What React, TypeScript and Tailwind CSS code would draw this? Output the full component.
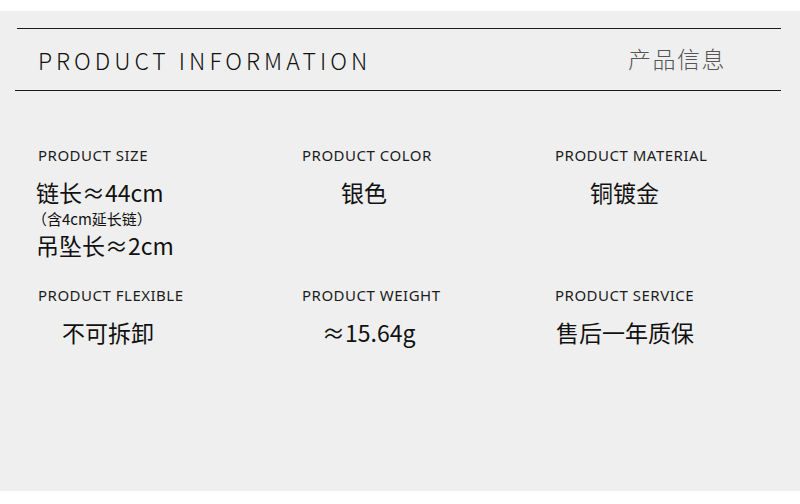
import React from "react";

interface Spec {
  label: string;
  indent: string;
  lines: { text: string; small?: boolean }[];
}

const cjk = "font-['Noto_Sans_CJK_SC',sans-serif]";

const rowOne: Spec[] = [
  {
    label: "PRODUCT SIZE",
    indent: "-ml-[2px]",
    lines: [{ text: "链长≈44cm" }, { text: "（含4cm延长链）", small: true }, { text: "吊坠长≈2cm" }],
  },
  { label: "PRODUCT COLOR", indent: "pl-[39px]", lines: [{ text: "银色" }] },
  { label: "PRODUCT MATERIAL", indent: "pl-[35px]", lines: [{ text: "铜镀金" }] },
];

const rowTwo: Spec[] = [
  { label: "PRODUCT FLEXIBLE", indent: "pl-[24px]", lines: [{ text: "不可拆卸" }] },
  { label: "PRODUCT WEIGHT", indent: "pl-[20px]", lines: [{ text: "≈15.64g" }] },
  { label: "PRODUCT SERVICE", indent: "pl-[1px]", lines: [{ text: "售后一年质保" }] },
];

function SpecCell({ spec }: { spec: Spec }) {
  return (
    <div className="flex flex-col">
      <div className="text-[15px] leading-[20px] text-[#1c1c1c] font-['Noto_Sans',sans-serif] tracking-[0.5px]">
        {spec.label}
      </div>
      <div className={`mt-[12px] flex flex-col ${spec.indent} ${cjk} text-[#111]`}>
        {spec.lines.map((l) =>
          l.small ? (
            <div key={l.text} className="text-[15px] leading-[23px] ml-[-4px]">
              {l.text}
            </div>
          ) : (
            <div key={l.text} className="text-[23px] leading-[30px]">
              {l.text}
            </div>
          )
        )}
      </div>
    </div>
  );
}

export default function App() {
  return (
    <div className="w-[800px] h-[504px] bg-white flex flex-col">
      <div className="h-[11px]" />
      <div className="h-[480px] bg-[#efefef] flex flex-col px-[16px] pt-[17px]">
        <div className="h-[1px] bg-[#1a1a1a] ml-[1px] mr-[3px]" />
        <div className="h-[61px] flex items-center justify-between pl-[22px] pr-[58px]">
          <span className={`${cjk} font-light text-[23px] tracking-[4px] text-[#111] mt-[2px]`}>
            PRODUCT INFORMATION
          </span>
          <span className={`${cjk} font-light text-[23px] text-[#555] tracking-[1.5px] -mt-[2px]`}>
            产品信息
          </span>
        </div>
        <div className="h-[1px] bg-[#1a1a1a] -ml-[1px] mr-[3px]" />

        <div className="grid grid-cols-[264px_253px_1fr] pl-[22px] mt-[54px]">
          {rowOne.map((s) => (
            <SpecCell key={s.label} spec={s} />
          ))}
        </div>
        <div className="grid grid-cols-[264px_253px_1fr] pl-[22px] mt-[25px]">
          {rowTwo.map((s) => (
            <SpecCell key={s.label} spec={s} />
          ))}
        </div>
      </div>
    </div>
  );
}
